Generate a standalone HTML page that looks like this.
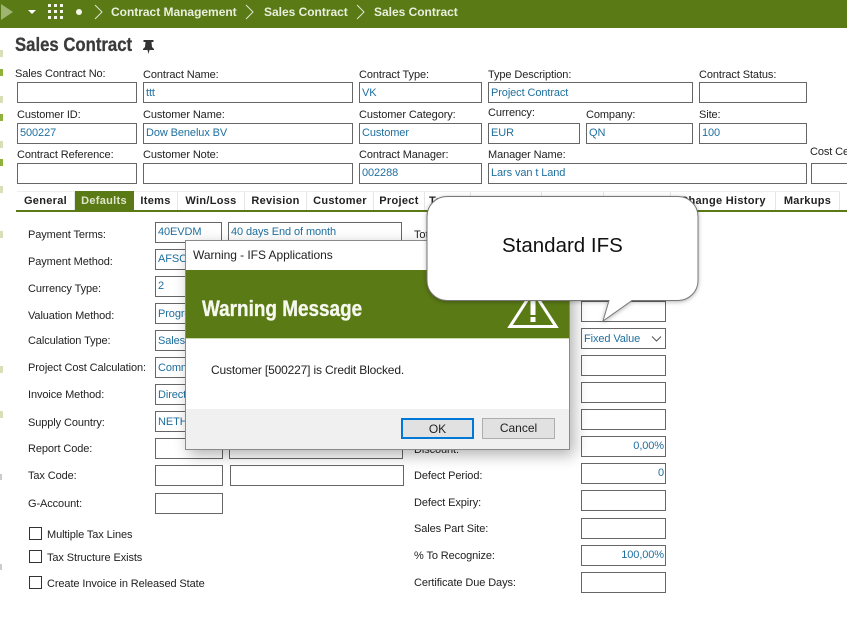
<!DOCTYPE html>
<html><head><meta charset="utf-8"><title>Sales Contract</title>
<style>
html,body{margin:0;padding:0;background:#fff}
#p{position:relative;width:847px;height:618px;overflow:hidden;background:#fff;font-family:"Liberation Sans",sans-serif;font-size:11px;color:#222;letter-spacing:-.1px}
#p div{position:absolute;box-sizing:border-box;white-space:nowrap}
.l{line-height:16px;height:16px}
.f{border:1px solid #666;height:21px;background:#fff;color:#1f6f9f;line-height:19px;padding-left:2px}
.d{line-height:21px}
.r{text-align:right;padding-right:1px;padding-left:0}
.t{top:191px;height:19px;line-height:18px;font-weight:bold;color:#222;letter-spacing:.3px;text-align:center;border-right:1px solid #e6e6e6;border-top:1px solid #eee}
.c{width:13px;height:13px;border:1px solid #333;left:29px;background:#fff}
.m{left:0;width:3px;height:7px;background:#d6dfb6}
.b{height:16px;line-height:16px;font-weight:bold;font-size:12px;color:#e9efdc;letter-spacing:-.02px}
</style></head><body><div id="p">

<div style="left:0;top:0;width:847px;height:28px;background:#5a7a16"></div>
<svg style="position:absolute;left:0;top:0" width="130" height="28">
<path d="M1 4L13 12L1 20Z" fill="#9db570"/>
<path d="M28 10H36L32 14Z" fill="#fff"/>
<g fill="#f4f6ea"><rect x="48" y="4" width="3" height="3"/><rect x="54" y="4" width="3" height="3"/><rect x="60" y="4" width="3" height="3"/><rect x="48" y="10" width="3" height="3"/><rect x="54" y="10" width="3" height="3"/><rect x="60" y="10" width="3" height="3"/><rect x="48" y="16" width="3" height="3"/><rect x="54" y="16" width="3" height="3"/><rect x="60" y="16" width="3" height="3"/></g>
<circle cx="79" cy="12" r="3" fill="#f4f6ea"/>
<path d="M95 5L102 12L95 19" fill="none" stroke="#dfe6cc" stroke-width="1"/>
</svg>
<svg style="position:absolute;left:240px;top:0" width="140" height="28" fill="none" stroke="#dfe6cc">
<path d="M6 5L13 12L6 19"/><path d="M117 5L124 12L117 19"/></svg>
<div class="b" style="left:111px;top:4px">Contract Management</div>
<div class="b" style="left:264px;top:4px">Sales Contract</div>
<div class="b" style="left:374px;top:4px">Sales Contract</div>

<div class="m" style="top:50px"></div><div class="m" style="top:69px;background:#8fb33a"></div><div class="m" style="top:96px"></div><div class="m" style="top:114px;background:#8fb33a"></div><div class="m" style="top:141px"></div><div class="m" style="top:159px;background:#8fb33a"></div><div class="m" style="top:186px"></div><div class="m" style="top:231px"></div><div class="m" style="top:366px"></div><div class="m" style="top:411px"></div>
<div class="m" style="top:474px;height:6px;width:2px;background:#ccc"></div><div class="m" style="top:564px;height:6px;width:2px;background:#ccc"></div>

<div style="left:15px;top:34px;height:24px;line-height:24px;font-size:19px;font-weight:bold;color:#3b3b3b;letter-spacing:0;-webkit-text-stroke:.3px #3b3b3b;transform:scaleX(.88);transform-origin:0 0">Sales Contract</div>
<svg style="position:absolute;left:142px;top:39px" width="13" height="16"><path d="M1.500 1H11.500V3H9.500L10 8L12 10V11H7.500L6.500 15L5.500 11H1V10L3 8L3.500 3H1.500Z" fill="#333"/></svg>

<div class="l" style="left:15px;top:66px">Sales Contract No:</div>
<div class="l" style="left:143px;top:67px">Contract Name:</div>
<div class="l" style="left:359px;top:67px">Contract Type:</div>
<div class="l" style="left:488px;top:67px">Type Description:</div>
<div class="l" style="left:699px;top:67px">Contract Status:</div>
<div class="f" style="left:17px;top:82px;width:120px"></div>
<div class="f d" style="left:143px;top:82px;width:210px">ttt</div>
<div class="f d" style="left:359px;top:82px;width:123px">VK</div>
<div class="f d" style="left:488px;top:82px;width:205px">Project Contract</div>
<div class="f" style="left:699px;top:82px;width:108px"></div>

<div class="l" style="left:17px;top:107px">Customer ID:</div>
<div class="l" style="left:143px;top:107px">Customer Name:</div>
<div class="l" style="left:359px;top:107px">Customer Category:</div>
<div class="l" style="left:488px;top:105px">Currency:</div>
<div class="l" style="left:586px;top:107px">Company:</div>
<div class="l" style="left:699px;top:107px">Site:</div>
<div class="f" style="left:17px;top:123px;width:120px">500227</div>
<div class="f" style="left:143px;top:123px;width:210px">Dow Benelux BV</div>
<div class="f" style="left:359px;top:123px;width:123px">Customer</div>
<div class="f" style="left:488px;top:123px;width:92px">EUR</div>
<div class="f" style="left:586px;top:123px;width:107px">QN</div>
<div class="f" style="left:699px;top:123px;width:108px">100</div>

<div class="l" style="left:17px;top:147px">Contract Reference:</div>
<div class="l" style="left:143px;top:147px">Customer Note:</div>
<div class="l" style="left:359px;top:147px">Contract Manager:</div>
<div class="l" style="left:488px;top:147px">Manager Name:</div>
<div class="l" style="left:810px;top:144px">Cost Center:</div>
<div class="f" style="left:17px;top:163px;width:120px"></div>
<div class="f" style="left:143px;top:163px;width:210px"></div>
<div class="f" style="left:359px;top:163px;width:123px">002288</div>
<div class="f" style="left:488px;top:163px;width:319px">Lars van t Land</div>
<div class="f" style="left:811px;top:163px;width:50px"></div>

<div style="left:16px;top:210px;width:831px;height:2px;background:#5a7a16"></div>
<div class="t" style="left:17px;width:58px">General</div>
<div class="t" style="left:75px;width:59px;background:#5a7a16;color:#dfe6cc;border-color:#5a7a16">Defaults</div>
<div class="t" style="left:134px;width:44px">Items</div>
<div class="t" style="left:178px;width:67px">Win/Loss</div>
<div class="t" style="left:245px;width:62px">Revision</div>
<div class="t" style="left:307px;width:67px">Customer</div>
<div class="t" style="left:374px;width:51px">Project</div>
<div class="t" style="left:425px;width:46px;text-align:left;padding-left:4px">Terms</div>
<div class="t" style="left:471px;width:71px"></div>
<div class="t" style="left:542px;width:62px"></div>
<div class="t" style="left:604px;width:67px"></div>
<div class="t" style="left:671px;width:105px">Change History</div>
<div class="t" style="left:776px;width:64px">Markups</div>

<div class="l" style="left:28px;top:227px">Payment Terms:</div>
<div class="l" style="left:28px;top:254px">Payment Method:</div>
<div class="l" style="left:28px;top:281px">Currency Type:</div>
<div class="l" style="left:28px;top:308px">Valuation Method:</div>
<div class="l" style="left:28px;top:333px">Calculation Type:</div>
<div class="l" style="left:28px;top:360px">Project Cost Calculation:</div>
<div class="l" style="left:28px;top:387px">Invoice Method:</div>
<div class="l" style="left:28px;top:415px">Supply Country:</div>
<div class="l" style="left:28px;top:441px">Report Code:</div>
<div class="l" style="left:28px;top:468px">Tax Code:</div>
<div class="l" style="left:28px;top:496px">G-Account:</div>

<div class="f" style="left:155px;top:222px;width:67px">40EVDM</div>
<div class="f" style="left:228px;top:222px;width:174px">40 days End of month</div>
<div class="f" style="left:155px;top:249px;width:68px">AFSC</div>
<div class="f" style="left:155px;top:276px;width:68px">2</div>
<div class="f d" style="left:155px;top:303px;width:68px">Progress</div>
<div class="f d" style="left:155px;top:330px;width:68px">Sales</div>
<div class="f d" style="left:155px;top:357px;width:68px">Comm</div>
<div class="f d" style="left:155px;top:384px;width:68px">Direct</div>
<div class="f d" style="left:155px;top:411px;width:68px">NETH</div>
<div class="f" style="left:155px;top:438px;width:68px"></div>
<div class="f" style="left:229px;top:438px;width:174px"></div>
<div class="f" style="left:155px;top:465px;width:68px"></div>
<div class="f" style="left:230px;top:465px;width:174px"></div>
<div class="f" style="left:155px;top:493px;width:68px"></div>

<div class="c" style="top:527px"></div><div class="l" style="left:47px;top:527px">Multiple Tax Lines</div>
<div class="c" style="top:550px"></div><div class="l" style="left:47px;top:550px">Tax Structure Exists</div>
<div class="c" style="top:576px"></div><div class="l" style="left:47px;top:576px">Create Invoice in Released State</div>

<div class="l" style="left:414px;top:227px">Total</div>
<div class="l" style="left:414px;top:442px">Discount:</div>
<div class="l" style="left:414px;top:468px">Defect Period:</div>
<div class="l" style="left:414px;top:495px">Defect Expiry:</div>
<div class="l" style="left:414px;top:521px">Sales Part Site:</div>
<div class="l" style="left:414px;top:548px">% To Recognize:</div>
<div class="l" style="left:414px;top:575px">Certificate Due Days:</div>

<div class="f" style="left:581px;top:301px;width:85px"></div>
<div class="f d" style="left:581px;top:328px;width:85px">Fixed Value</div>
<svg style="position:absolute;left:651px;top:335px" width="12" height="8"><path d="M1 1.500L5.500 6L10 1.500" fill="none" stroke="#555"/></svg>
<div class="f" style="left:581px;top:355px;width:85px"></div>
<div class="f" style="left:581px;top:382px;width:85px"></div>
<div class="f" style="left:581px;top:409px;width:85px"></div>
<div class="f r" style="left:581px;top:436px;width:85px">0,00%</div>
<div class="f r" style="left:581px;top:463px;width:85px">0</div>
<div class="f" style="left:581px;top:490px;width:85px"></div>
<div class="f" style="left:581px;top:518px;width:85px"></div>
<div class="f r" style="left:581px;top:545px;width:85px">100,00%</div>
<div class="f" style="left:581px;top:572px;width:85px"></div>

<!-- dialog -->
<div style="left:185px;top:240px;width:385px;height:210px;background:#fff;border:1px solid #8a8a8a;box-shadow:4px 5px 14px rgba(0,0,0,.3)"></div>
<div class="l" style="left:193px;top:247px;font-size:12px;letter-spacing:-.05px;color:#222">Warning - IFS Applications</div>
<div style="left:186px;top:270px;width:383px;height:69px;background:#5a7a16;border-bottom:1px solid #cfd9b0"></div>
<div style="left:202px;top:296px;height:26px;line-height:26px;font-size:22px;font-weight:bold;color:#f6f8ee;letter-spacing:0;-webkit-text-stroke:.35px #f6f8ee;transform:scaleX(.86);transform-origin:0 0">Warning Message</div>
<svg style="position:absolute;left:505px;top:285px" width="56" height="48"><path d="M28 6L5 41.500H51Z" fill="none" stroke="#fff" stroke-width="3"/><rect x="25.500" y="14" width="5" height="16" fill="#fff"/><rect x="25.500" y="32" width="5" height="5" fill="#fff"/></svg>
<div class="l" style="left:211px;top:362px;font-size:12px;letter-spacing:-.16px;color:#222">Customer [500227] is Credit Blocked.</div>
<div style="left:186px;top:409px;width:383px;height:40px;background:#f0f0f0"></div>
<div style="left:401px;top:418px;width:73px;height:21px;background:#e1e1e1;border:2px solid #0078d7;text-align:center;line-height:18px;font-size:12px;letter-spacing:0;color:#222">OK</div>
<div style="left:482px;top:418px;width:73px;height:21px;background:#e1e1e1;border:1px solid #adadad;text-align:center;line-height:19px;font-size:12px;letter-spacing:0;color:#222">Cancel</div>

<!-- bubble -->
<svg style="position:absolute;left:420px;top:190px;filter:drop-shadow(0 1px 2px rgba(0,0,0,.3))" width="290" height="140">
<path d="M27 6.500H258A20 20 0 0 1 278 26.500V90.500A20 20 0 0 1 258 110.500H212L183 131L189 110.500H27A20 20 0 0 1 7 90.500V26.500A20 20 0 0 1 27 6.500Z" fill="#fff" stroke="#777" stroke-width="1"/>
</svg>
<div style="left:502px;top:234px;height:24px;line-height:24px;font-size:20.500px;color:#111;letter-spacing:0">Standard IFS</div>
</div></body></html>
